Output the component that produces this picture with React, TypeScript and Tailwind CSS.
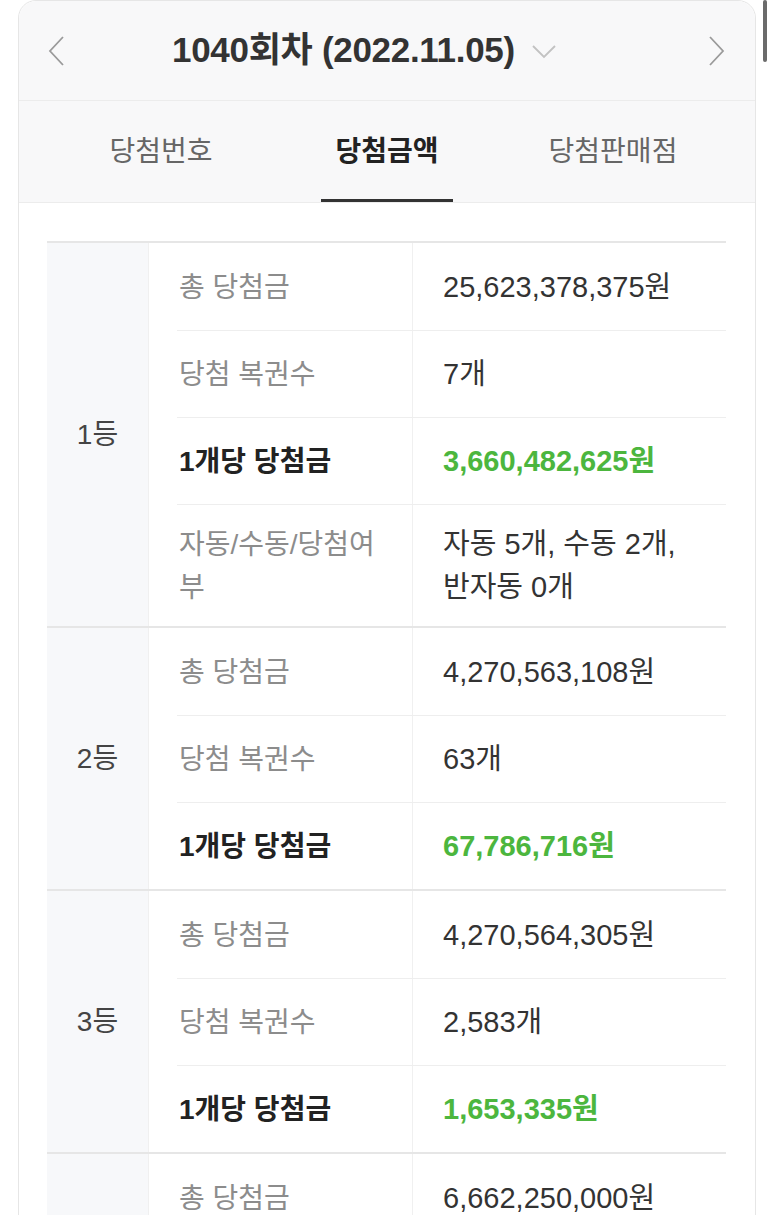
import React from "react";

type Row = { label: string; value: string; strong?: boolean };
type GroupData = { rank: string; rows: Row[] };

const groups: GroupData[] = [
  {
    rank: "1등",
    rows: [
      { label: "총 당첨금", value: "25,623,378,375원" },
      { label: "당첨 복권수", value: "7개" },
      { label: "1개당 당첨금", value: "3,660,482,625원", strong: true },
      { label: "자동/수동/당첨여부", value: "자동 5개, 수동 2개, 반자동 0개" },
    ],
  },
  {
    rank: "2등",
    rows: [
      { label: "총 당첨금", value: "4,270,563,108원" },
      { label: "당첨 복권수", value: "63개" },
      { label: "1개당 당첨금", value: "67,786,716원", strong: true },
    ],
  },
  {
    rank: "3등",
    rows: [
      { label: "총 당첨금", value: "4,270,564,305원" },
      { label: "당첨 복권수", value: "2,583개" },
      { label: "1개당 당첨금", value: "1,653,335원", strong: true },
    ],
  },
  {
    rank: "4등",
    rows: [
      { label: "총 당첨금", value: "6,662,250,000원" },
      { label: "당첨 복권수", value: "133,245개" },
      { label: "1개당 당첨금", value: "50,000원", strong: true },
    ],
  },
];

function Group({ g }: { g: GroupData }) {
  return (
    <div className="flex border-t-2 border-[#e6e6e6]">
      <div className="flex w-[102px] shrink-0 items-center justify-center border-r border-[#f0f0f0] bg-[#f7f8fa] text-[28px] text-[#444]">
        {g.rank}
      </div>
      <div className="flex-1 pl-[28px]">
        {g.rows.map((r, i) => (
          <div
            key={i}
            className={
              i > 0
                ? "flex min-h-[87px] border-t border-[#eeeeee]"
                : "flex min-h-[87px]"
            }
          >
            <div
              className={
                r.strong
                  ? "flex w-[235px] shrink-0 items-center pb-[17px] pt-[18px] pl-[2px] pr-[14px] text-[28px] font-bold leading-[43px] text-[#222]"
                  : "flex w-[235px] shrink-0 items-center pb-[17px] pt-[18px] pl-[2px] pr-[14px] text-[28px] leading-[43px] text-[#8c8c8c]"
              }
            >
              <span>{r.label}</span>
            </div>
            <div
              className={
                r.strong
                  ? "flex flex-1 items-center break-keep border-l border-[#f0f0f0] pb-[17px] pt-[18px] pl-[30px] pr-[8px] text-[29px] font-bold leading-[43px] text-[#4cb63e]"
                  : "flex flex-1 items-center break-keep border-l border-[#f0f0f0] pb-[17px] pt-[18px] pl-[30px] pr-[8px] text-[29px] leading-[43px] text-[#333]"
              }
            >
              <span>{r.value}</span>
            </div>
          </div>
        ))}
      </div>
    </div>
  );
}

export default function App() {
  const tabs = ["당첨번호", "당첨금액", "당첨판매점"];
  return (
    <div className="relative h-[1215px] w-[773px] overflow-hidden bg-white font-['Liberation_Sans','Noto_Sans_CJK_KR',sans-serif]">
      <div className="ml-[18px] mr-[17px] rounded-t-[18px] border border-[#e6e6e6] bg-white">
        {/* header */}
        <div className="flex h-[100px] items-center rounded-t-[18px] border-b border-[#ececec] bg-[#f8f8f9] pl-[29px] pr-[30px]">
          <svg width="16" height="30" viewBox="0 0 16 30" fill="none">
            <path d="M15 1 L2 15 L15 29" stroke="#9a9a9a" strokeWidth="1.8" />
          </svg>
          <div className="ml-[108px] flex items-center">
            <span className="text-[35px] font-bold tracking-[-0.3px] text-[#333]">
              1040회차 (2022.11.05)
            </span>
            <svg className="ml-[17px] mt-[2px]" width="24" height="14" viewBox="0 0 24 14" fill="none">
              <path d="M1 1 L12 12 L23 1" stroke="#c2c2c2" strokeWidth="1.8" />
            </svg>
          </div>
          <div className="flex-1" />
          <svg width="16" height="30" viewBox="0 0 16 30" fill="none">
            <path d="M1 1 L14 15 L1 29" stroke="#9a9a9a" strokeWidth="1.8" />
          </svg>
        </div>
        {/* tabs */}
        <div className="grid h-[102px] grid-cols-3 border-b border-[#ececec] bg-[#f8f8f9] px-[29px]">
          {tabs.map((t, i) => (
            <div key={t} className="flex h-full items-stretch justify-center">
              <span
                className={
                  i === 1
                    ? "flex items-center border-b-[3px] border-[#333] px-[14px] pt-[3px] text-[28px] font-bold text-[#222]"
                    : "flex items-center border-b-[3px] border-transparent px-[14px] pt-[3px] text-[28px] text-[#666]"
                }
              >
                {t}
              </span>
            </div>
          ))}
        </div>
        {/* table */}
        <div className="pl-[28px] pr-[29px] pt-[38px]">
          {groups.map((g) => (
            <Group key={g.rank} g={g} />
          ))}
        </div>
      </div>
      <div className="absolute right-[6px] top-0 h-[62px] w-[4px] rounded-full bg-[#6b6b6b]" />
    </div>
  );
}
